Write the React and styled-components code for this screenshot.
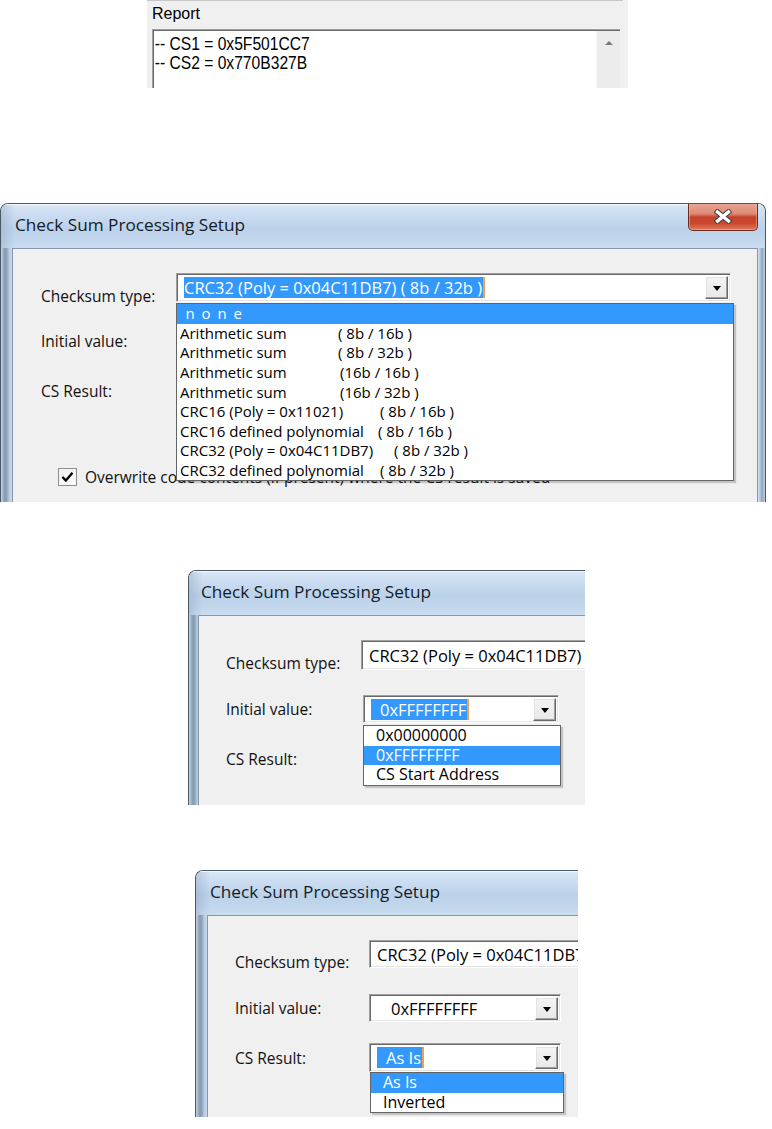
import React from "react";
import styled, { createGlobalStyle } from "styled-components";

const Global = createGlobalStyle`
  html, body { margin: 0; padding: 0; background: #ffffff; }
  body { font-family: "Open Sans", "Noto Sans", sans-serif; color: #000; }
  * { box-sizing: border-box; }
`;

const Page = styled.div`
  width: 772px;
  min-height: 1129px;
  display: flex;
  flex-direction: column;
  align-items: flex-start;
`;

const Figure = styled.div`
  margin-top: ${(p) => p.$top}px;
  margin-left: ${(p) => p.$left}px;
`;

/* ---------- Report panel ---------- */
const ReportPanel = styled.section`
  width: 481px;
  height: 88px;
  background: #f0f0f0;
  overflow: hidden;
  display: flex;
  flex-direction: column;
  padding-left: 5px;
`;

const PrevEdge = styled.div`
  margin-left: -5px;
  width: 476px;
  height: 2px;
  background: #7a7a7a;
  border-bottom: 1px solid #c8c8c8;
`;

const ReportLabel = styled.div`
  font-family: "Liberation Sans", Arial, sans-serif;
  font-size: 16px;
  line-height: 18px;
  margin-top: 4px;
  color: #000;
`;

const ReportBox = styled.div`
  margin-top: 6px;
  width: 468px;
  height: 80px;
  flex-shrink: 0;
  display: flex;
  background: #fff;
  border-top: 1px solid #a0a0a0;
  border-left: 1px solid #a0a0a0;
  box-shadow: inset 1px 1px 0 #696969;
`;

const ReportText = styled.div`
  flex: 1;
  padding: 4px 0 0 2px;
  font-family: "Liberation Sans", Arial, sans-serif;
  font-size: 18.5px;
  line-height: 19px;
  color: #000;
  transform: scaleX(0.845);
  transform-origin: left top;
`;

const ScrollBar = styled.div`
  width: 24px;
  margin-top: 1px;
  background: #ececec;
  border-left: 1px solid #f6f6f6;
  display: flex;
  flex-direction: column;
`;

const ScrollUp = styled.div`
  height: 24px;
  display: flex;
  align-items: center;
  justify-content: center;
  &::after {
    content: "";
    border-left: 4px solid transparent;
    border-right: 4px solid transparent;
    border-bottom: 4px solid #7a7a7a;
  }
`;

/* ---------- Window chrome ---------- */
const Win = styled.div`
  width: ${(p) => p.$w}px;
  height: ${(p) => p.$h}px;
  display: flex;
  flex-direction: column;
  overflow: hidden;
  border: 1px solid #4b5866;
  border-bottom: none;
  ${(p) => (p.$cut ? "border-right: none;" : "")}
  border-radius: ${(p) => (p.$cut ? "8px 0 0 0" : "8px 8px 0 0")};
  background: #c4d8ee;
`;

const TitleBar = styled.div`
  height: 44px;
  flex-shrink: 0;
  display: flex;
  justify-content: space-between;
  align-items: flex-start;
  padding-left: ${(p) => p.$pad}px;
  background: linear-gradient(
      90deg,
      rgba(140, 160, 185, 0.4) 0px,
      rgba(150, 170, 195, 0) 14px
    ),
    linear-gradient(
      180deg,
      #dbe8f6 0%,
      #cadcf1 25%,
      #bcd2ea 55%,
      #c3d7ed 85%,
      #cbddf1 100%
    );
  box-shadow: inset 0 1px 0 rgba(255, 255, 255, 0.7);
`;

const TitleText = styled.div`
  margin-top: 10px;
  font-family: "Open Sans", "Noto Sans", sans-serif;
  font-size: 17.2px;
  line-height: 22px;
  color: #141c26;
  white-space: nowrap;
`;

const CloseButton = styled.div`
  width: 70px;
  height: 28px;
  margin-right: 7px;
  margin-top: -1px;
  display: flex;
  align-items: center;
  justify-content: center;
  border: 1px solid #6a2a1f;
  border-top: none;
  border-radius: 0 0 5px 5px;
  background: linear-gradient(
    180deg,
    #e9a797 0%,
    #dd8a74 40%,
    #c6432b 52%,
    #c9482e 75%,
    #e07a58 100%
  );
  box-shadow: inset 0 0 0 1px rgba(255, 200, 180, 0.45);
`;

const WinBody = styled.div`
  flex: 1;
  display: flex;
  min-height: 0;
`;

const SideFrame = styled.div`
  width: ${(p) => p.$w}px;
  flex-shrink: 0;
  background: ${(p) =>
    p.$right
      ? "linear-gradient(90deg, #d3e2f3 0px, #b4c8de 2px, #93a7bd 4px, #a9bdd3 6px, #c0d4ea 7px)"
      : "linear-gradient(90deg, #c2d5ea 0px, #a0b4ca 2px, #8598ad 4px, #93a6bb 6px, #b5c9df 8px, #c8dbf0 11px)"};
`;

const Client = styled.div`
  flex: 1;
  min-width: 0;
  background: #f0f0f0;
  border: 1px solid #8497ad;
  border-bottom: none;
  ${(p) => (p.$cut ? "border-right: none;" : "")}
  overflow: hidden;
`;

function CloseGlyph() {
  return (
    <svg width="20" height="15" viewBox="0 0 20 15">
      <path
        d="M4.5 3 L15.5 12 M15.5 3 L4.5 12"
        stroke="#3d3d3d"
        strokeWidth="5.4"
        strokeLinecap="square"
        fill="none"
      />
      <path
        d="M4.5 3 L15.5 12 M15.5 3 L4.5 12"
        stroke="#ffffff"
        strokeWidth="3.4"
        strokeLinecap="square"
        fill="none"
      />
    </svg>
  );
}

function Dialog({ w, h, frame, cut, children }) {
  return (
    <Win $w={w} $h={h} $cut={cut}>
      <TitleBar $pad={frame + 2}>
        <TitleText>Check Sum Processing Setup</TitleText>
        {!cut && (
          <CloseButton>
            <CloseGlyph />
          </CloseButton>
        )}
      </TitleBar>
      <WinBody>
        <SideFrame $w={frame - 1} />
        <Client $cut={cut}>{children}</Client>
        {!cut && <SideFrame $w={7} $right />}
      </WinBody>
    </Win>
  );
}

/* ---------- Form ---------- */
const Form = styled.div`
  display: flex;
  flex-direction: column;
  padding: 24px 0 0 ${(p) => p.$left}px;
`;

const Row = styled.div`
  display: flex;
  align-items: center;
  height: ${(p) => p.$h}px;
  margin-top: ${(p) => p.$mt || 0}px;
`;

const Label = styled.div`
  width: ${(p) => p.$w}px;
  flex-shrink: 0;
  font-size: 15.5px;
  line-height: 20px;
  color: #111;
  white-space: nowrap;
  padding-top: ${(p) => (p.$drop ? 16 : 0)}px;
`;

const Combo = styled.div`
  position: relative;
  width: ${(p) => p.$w}px;
  height: 100%;
  flex-shrink: 0;
  display: flex;
  align-items: center;
  background: #fff;
  border: 1px solid;
  border-color: #a0a0a0 #ffffff #ffffff #a0a0a0;
  box-shadow: inset 1px 1px 0 #696969, inset -1px -1px 0 #e3e3e3;
  padding: 0 2px 0 ${(p) => p.$pad}px;
`;

const ComboValue = styled.div`
  flex: 1;
  min-width: 0;
  font-size: 16.5px;
  line-height: 21px;
  white-space: pre;
  overflow: hidden;
  color: #000;
`;

const Selected = styled.span`
  display: inline-block;
  background: #3399ff;
  color: #fff;
  padding: 0 1px 0 ${(p) => p.$lead || 0}px;
  border-right: 2px solid #e6a452;
`;

const DropButton = styled.div`
  width: 23px;
  height: 23px;
  flex-shrink: 0;
  display: flex;
  align-items: center;
  justify-content: center;
  background: linear-gradient(180deg, #f4f4f4, #e8e8e8);
  border: 1px solid;
  border-color: #ffffff #696969 #696969 #ffffff;
  box-shadow: inset -1px -1px 0 #a0a0a0, inset 1px 1px 0 #e3e3e3;
  &::after {
    content: "";
    margin-top: 2px;
    border-left: 4.5px solid transparent;
    border-right: 4.5px solid transparent;
    border-top: 5px solid #000;
  }
`;

const DropList = styled.div`
  position: absolute;
  z-index: 10;
  top: calc(100% + ${(p) => p.$gap}px);
  left: ${(p) => p.$left}px;
  width: ${(p) => p.$w}px;
  background: #fff;
  border: 1px solid #646464;
  box-shadow: 2px 2px 1px rgba(0, 0, 0, 0.18);
  display: flex;
  flex-direction: column;
`;

const Item = styled.div`
  height: 19.6px;
  display: flex;
  align-items: center;
  padding-left: ${(p) => p.$pad}px;
  font-size: ${(p) => p.$fs || 15}px;
  line-height: 19px;
  white-space: pre;
  background: ${(p) => (p.$sel ? "#3399ff" : "transparent")};
  color: ${(p) => (p.$sel ? "#fff" : "#000")};
`;

const ItemName = styled.span`
  min-width: ${(p) => p.$col}px;
  white-space: pre;
  letter-spacing: ${(p) => (p.$spaced ? "1.5px" : "0")};
`;

const CheckRow = styled.div`
  display: flex;
  align-items: center;
  gap: 8px;
  margin-top: 63px;
  margin-left: 17px;
  height: 18px;
`;

const CheckBox = styled.div`
  width: 19px;
  height: 18px;
  flex-shrink: 0;
  border: 1px solid #8e8f8f;
  background: linear-gradient(135deg, #f0f0f0, #ffffff);
  box-shadow: inset 0 0 0 1px #f4f4f4;
  display: flex;
  align-items: center;
  justify-content: center;
`;

const CheckText = styled.div`
  font-size: 15.5px;
  line-height: 20px;
  white-space: nowrap;
  color: #111;
`;

const crcItems = [
  { name: " n o n e", suffix: "", col: 0, sel: true, spaced: true },
  { name: "Arithmetic sum", suffix: "( 8b / 16b )", col: 158 },
  { name: "Arithmetic sum", suffix: "( 8b / 32b )", col: 158 },
  { name: "Arithmetic sum", suffix: "(16b / 16b )", col: 160 },
  { name: "Arithmetic sum", suffix: "(16b / 32b )", col: 160 },
  { name: "CRC16 (Poly = 0x11021)", suffix: "( 8b / 16b )", col: 200 },
  { name: "CRC16 defined polynomial", suffix: "( 8b / 16b )", col: 198 },
  { name: "CRC32 (Poly = 0x04C11DB7)", suffix: "( 8b / 32b )", col: 214 },
  { name: "CRC32 defined polynomial", suffix: "( 8b / 32b )", col: 200 },
];

const CRC_TEXT = "CRC32 (Poly = 0x04C11DB7)";

export default function App() {
  return (
    <>
      <Global />
      <Page>
        <Figure $top={0} $left={147}>
          <ReportPanel>
            <PrevEdge />
            <ReportLabel>Report</ReportLabel>
            <ReportBox>
              <ReportText>
                <div>-- CS1 = 0x5F501CC7</div>
                <div>-- CS2 = 0x770B327B</div>
              </ReportText>
              <ScrollBar>
                <ScrollUp />
              </ScrollBar>
            </ReportBox>
          </ReportPanel>
        </Figure>

        <Figure $top={115} $left={0}>
          <Dialog w={766} h={299} frame={12}>
            <Form $left={28}>
              <Row $h={29}>
                <Label $w={135} $drop>
                  Checksum type:
                </Label>
                <Combo $w={555} $pad={7}>
                  <ComboValue>
                    <Selected>{CRC_TEXT + " ( 8b / 32b )"}</Selected>
                  </ComboValue>
                  <DropButton />
                  <DropList $gap={2} $left={-1} $w={558}>
                    {crcItems.map((it, i) => (
                      <Item key={i} $sel={it.sel} $pad={3}>
                        <ItemName $col={it.col} $spaced={it.spaced}>
                          {it.name}
                        </ItemName>
                        {it.suffix}
                      </Item>
                    ))}
                  </DropList>
                </Combo>
              </Row>
              <Row $h={28} $mt={25}>
                <Label $w={135}>Initial value:</Label>
                <Combo $w={196} $pad={16}>
                  <ComboValue>0xFFFFFFFF</ComboValue>
                  <DropButton />
                </Combo>
              </Row>
              <Row $h={29} $mt={21}>
                <Label $w={135}>CS Result:</Label>
                <Combo $w={196} $pad={16}>
                  <ComboValue>As Is</ComboValue>
                  <DropButton />
                </Combo>
              </Row>
              <CheckRow>
                <CheckBox>
                  <svg width="13" height="12" viewBox="0 0 13 12">
                    <path
                      d="M1.5 6 L4.8 9.5 L11.5 1.8"
                      stroke="#000"
                      strokeWidth="2.4"
                      fill="none"
                    />
                  </svg>
                </CheckBox>
                <CheckText>
                  Overwrite code contents (if present) where the CS result is saved
                </CheckText>
              </CheckRow>
            </Form>
          </Dialog>
        </Figure>

        <Figure $top={68} $left={188}>
          <Dialog w={397} h={235} frame={10} cut>
            <Form $left={27}>
              <Row $h={30}>
                <Label $w={135} $drop>
                  Checksum type:
                </Label>
                <Combo $w={300} $pad={7}>
                  <ComboValue>{CRC_TEXT + " ( 8b / 32b )"}</ComboValue>
                </Combo>
              </Row>
              <Row $h={28} $mt={25}>
                <Label $w={137}>Initial value:</Label>
                <Combo $w={196} $pad={7}>
                  <ComboValue>
                    <Selected $lead={9}>0xFFFFFFFF</Selected>
                  </ComboValue>
                  <DropButton />
                  <DropList $gap={3} $left={-1} $w={198}>
                    <Item $pad={12} $fs={16}>0x00000000</Item>
                    <Item $pad={12} $fs={16} $sel>
                      0xFFFFFFFF
                    </Item>
                    <Item $pad={12} $fs={16}>CS Start Address</Item>
                  </DropList>
                </Combo>
              </Row>
              <Row $h={29} $mt={21}>
                <Label $w={137}>CS Result:</Label>
                <Combo $w={196} $pad={16}>
                  <ComboValue>As Is</ComboValue>
                  <DropButton />
                </Combo>
              </Row>
            </Form>
          </Dialog>
        </Figure>

        <Figure $top={65} $left={195}>
          <Dialog w={383} h={247} frame={12} cut>
            <Form $left={27}>
              <Row $h={28}>
                <Label $w={134} $drop>
                  Checksum type:
                </Label>
                <Combo $w={300} $pad={7}>
                  <ComboValue>{CRC_TEXT + " ( 8b / 32b )"}</ComboValue>
                </Combo>
              </Row>
              <Row $h={28} $mt={26}>
                <Label $w={134}>Initial value:</Label>
                <Combo $w={192} $pad={21}>
                  <ComboValue>0xFFFFFFFF</ComboValue>
                  <DropButton />
                </Combo>
              </Row>
              <Row $h={29} $mt={21}>
                <Label $w={134}>CS Result:</Label>
                <Combo $w={192} $pad={7}>
                  <ComboValue>
                    <Selected $lead={9}>As Is</Selected>
                  </ComboValue>
                  <DropButton />
                  <DropList $gap={1} $left={0} $w={194}>
                    <Item $pad={12} $fs={16} $sel>
                      As Is
                    </Item>
                    <Item $pad={12} $fs={16}>Inverted</Item>
                  </DropList>
                </Combo>
              </Row>
            </Form>
          </Dialog>
        </Figure>
      </Page>
    </>
  );
}
